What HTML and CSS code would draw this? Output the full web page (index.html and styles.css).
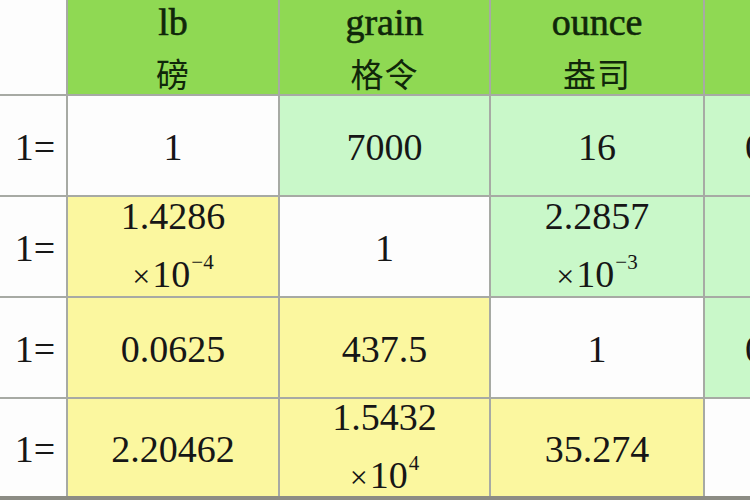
FILE: index.html
```html
<!DOCTYPE html>
<html lang="zh">
<head>
<meta charset="utf-8">
<link rel="stylesheet" href="styles.css">
</head>
<body>
<div class="sheet">
  <div class="cell white corner"><span class="cut">：</span></div>
  <div class="cell head"><span class="en">lb</span><span class="zh">磅</span></div>
  <div class="cell head"><span class="en">grain</span><span class="zh">格令</span></div>
  <div class="cell head"><span class="en">ounce</span><span class="zh">盎司</span></div>
  <div class="cell head"></div>

  <div class="cell white lead">1=</div>
  <div class="cell white">1</div>
  <div class="cell mint">7000</div>
  <div class="cell mint">16</div>
  <div class="cell mint edge">0.4536</div>

  <div class="cell white lead">1=</div>
  <div class="cell yellow two"><span>1.4286</span><span><span class="x">×</span>10<sup>−4</sup></span></div>
  <div class="cell white">1</div>
  <div class="cell mint two"><span>2.2857</span><span><span class="x">×</span>10<sup>−3</sup></span></div>
  <div class="cell mint edge"></div>

  <div class="cell white lead">1=</div>
  <div class="cell yellow">0.0625</div>
  <div class="cell yellow">437.5</div>
  <div class="cell white">1</div>
  <div class="cell mint edge">0.0283</div>

  <div class="cell white lead">1=</div>
  <div class="cell yellow">2.20462</div>
  <div class="cell yellow two"><span>1.5432</span><span><span class="x">×</span>10<sup>4</sup></span></div>
  <div class="cell yellow">35.274</div>
  <div class="cell white edge"></div>
</div>
</body>
</html>
```
FILE: styles.css
```css
html, body {
  margin: 0;
  padding: 0;
  width: 750px;
  height: 500px;
  overflow: hidden;
  background: #ffffff;
}

.sheet {
  display: grid;
  grid-template-columns: 66px 210px 209px 212px 80px;
  grid-template-rows: 94px 99px 99px 99px 97px;
  gap: 2px;
  background: #a7aaa4;
  width: 785px;
  height: 500px;
  border-bottom: 4px solid #8c8c84;
  box-sizing: border-box;
  font-family: "Liberation Serif", "Times New Roman", serif;
  font-size: 38px;
  color: #161616;
}

.cell {
  display: flex;
  flex-direction: column;
  align-items: center;
  justify-content: center;
  min-width: 0;
  min-height: 0;
}

.white { background: #fdfdfd; }
.mint { background: #c9f8c9; }
.yellow { background: #fbf79f; }

.head {
  background: #8fd953;
  color: #10270a;
  gap: 11px;
}

.head .en {
  font-size: 38px;
  line-height: 40px;
  -webkit-text-stroke: 0.6px #10270a;
}

.head .zh {
  font-family: "Noto Sans CJK SC", sans-serif;
  font-size: 33px;
  line-height: 40px;
  letter-spacing: 1px;
}

.corner {
  align-items: flex-start;
  justify-content: flex-start;
  overflow: hidden;
}

.cut {
  font-family: "Noto Sans CJK SC", sans-serif;
  font-size: 36px;
  line-height: 40px;
  margin-left: -15px;
  margin-top: 20px;
  color: #222;
}

.cell:not(.head):not(.corner) {
  padding-top: 3px;
}

.lead {
  padding-left: 4px;
}

.two {
  line-height: 42px;
  gap: 16px;
}

.two sup {
  font-size: 21px;
  vertical-align: 0;
  position: relative;
  top: -18px;
  margin-left: 1px;
}

.x {
  font-size: 32px;
  margin-right: 2px;
}

.edge {
  align-items: flex-start;
  padding-left: 40px;
  overflow: hidden;
}
```
